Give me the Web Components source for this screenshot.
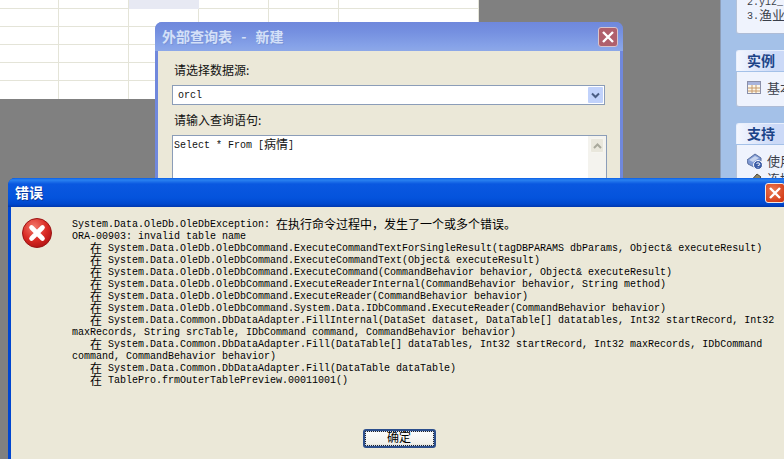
<!DOCTYPE html>
<html>
<head>
<meta charset="utf-8">
<style>
html, body { margin: 0; height: 100%; overflow: hidden; background: #808080; }
body { font: 12px "Liberation Mono", "Noto Sans CJK SC", monospace; }
.form { padding: 11px 0 0 14px; }
.mono { font: 10px/14px "Liberation Mono", monospace; letter-spacing: 0; }
</style>
</head>
<body>
<x-sheet></x-sheet>
<side-panel>
  <task-card clipped>
    <div class="mono" style="margin-top:-4px">2.yiz_</div>
    <div class="mono">3.<c-j style="font-size:13px">渔业</c-j></div>
  </task-card>
  <task-card title="实例" style="height:57px">
    <task-row icon="table">基本</task-row>
  </task-card>
  <task-card title="支持" style="height:200px">
    <task-row icon="help">使用</task-row>
    <task-row icon="pen">连接</task-row>
  </task-card>
</side-panel>

<xp-window id="query" title="外部查询表 - 新建" inactive>
  <div class="form">
    <form-label>请选择数据源:</form-label>
    <x-combo value="orcl"></x-combo>
    <form-label>请输入查询语句:</form-label>
    <x-memo>Select * From [<c-j>病情</c-j>]</x-memo>
  </div>
</xp-window>

<xp-window id="err" title="错误">
  <error-box>
    <err-line>System.Data.OleDb.OleDbException: <c-j>在执行命令过程中，发生了一个或多个错误。</c-j></err-line>
    <err-line>ORA-00903: invalid table name</err-line>
    <err-line>   <c-j>在</c-j> System.Data.OleDb.OleDbCommand.ExecuteCommandTextForSingleResult(tagDBPARAMS dbParams, Object&amp; executeResult)</err-line>
    <err-line>   <c-j>在</c-j> System.Data.OleDb.OleDbCommand.ExecuteCommandText(Object&amp; executeResult)</err-line>
    <err-line>   <c-j>在</c-j> System.Data.OleDb.OleDbCommand.ExecuteCommand(CommandBehavior behavior, Object&amp; executeResult)</err-line>
    <err-line>   <c-j>在</c-j> System.Data.OleDb.OleDbCommand.ExecuteReaderInternal(CommandBehavior behavior, String method)</err-line>
    <err-line>   <c-j>在</c-j> System.Data.OleDb.OleDbCommand.ExecuteReader(CommandBehavior behavior)</err-line>
    <err-line>   <c-j>在</c-j> System.Data.OleDb.OleDbCommand.System.Data.IDbCommand.ExecuteReader(CommandBehavior behavior)</err-line>
    <err-line>   <c-j>在</c-j> System.Data.Common.DbDataAdapter.FillInternal(DataSet dataset, DataTable[] datatables, Int32 startRecord, Int32</err-line>
    <err-line>maxRecords, String srcTable, IDbCommand command, CommandBehavior behavior)</err-line>
    <err-line>   <c-j>在</c-j> System.Data.Common.DbDataAdapter.Fill(DataTable[] dataTables, Int32 startRecord, Int32 maxRecords, IDbCommand</err-line>
    <err-line>command, CommandBehavior behavior)</err-line>
    <err-line>   <c-j>在</c-j> System.Data.Common.DbDataAdapter.Fill(DataTable dataTable)</err-line>
    <err-line>   <c-j>在</c-j> TablePro.frmOuterTablePreview.00011001()</err-line>
  </error-box>
</xp-window>

<script>
// small helper, every element is just a shadow root with its own style + markup
function shadow(el, html) {
    el.attachShadow({ mode: 'open' });
    const t = document.createElement('template');
    t.innerHTML = html;
    el.shadowRoot.appendChild(t.content.cloneNode(true));
}

class XSheet extends HTMLElement {
    constructor() {
        super();
        let cells = '';
        for (let r = 0; r < 6; r++) {
            for (let c = 0; c < 7; c++) {
                cells += `<div class="${r == 0 && c == 2 ? 'sel' : ''}"></div>`;
            }
        }
        shadow(this, `<style>
            :host { position: absolute; left: 0; top: 0; width: 479px; height: 99px; display: grid; background: #fff;
                grid-template-columns: 59px repeat(5, 70px) 70px; grid-template-rows: 9px repeat(5, 18px); }
            div { border-right: 1px solid #e4e4d8; border-bottom: 1px solid #e4e4d8; box-sizing: border-box; }
            div:nth-child(7n) { border-right: 0; }
            div:nth-child(n+36) { border-bottom: 0; }
            .sel { background: #e7e9f3; border-color: #e7e9f3; }
        </style>${cells}`);
    }
}
customElements.define('x-sheet', XSheet);

class SidePanel extends HTMLElement {
    constructor() {
        super();
        shadow(this, `<style>
            :host { position: absolute; left: 720px; top: 0; width: 64px; height: 459px; overflow: hidden; display: flex; flex-direction: column;
                gap: 16px; padding-left: 15px; box-sizing: border-box; background: #a4c1e8; border-left: 1px solid #8e9eb8;
                font: 13px "Noto Sans CJK SC", sans-serif; color: #3a3f4a; }
        </style><slot></slot>`);
    }
}
customElements.define('side-panel', SidePanel);

class TaskCard extends HTMLElement {
    constructor() {
        super();
        const t = this.getAttribute('title');
        this.removeAttribute('title');
        shadow(this, `<style>
            :host { display: flex; flex-direction: column; width: 64px; flex: none; }
            :host([clipped]) { height: 34px; }
            .head { height: 21px; padding: 0 0 2px 10px; display: flex; align-items: center; box-sizing: border-box; border-radius: 3px 0 0 0;
                background: linear-gradient(90deg, #f4f7ff, #cbd9f7 60%); border: 1px solid #e8effc; border-width: 1px 0 0 1px;
                font: bold 14px "Noto Sans CJK SC", sans-serif; color: #1c4488; margin-bottom: 1px; }
            .body { flex: 1; min-height: 0; overflow: hidden; background: #eff3fd; border-left: 1px solid #b4c2d8; border-bottom: 1px solid #aebcd6;
                border-radius: 0 0 0 3px; padding: 7px 0 0 10px; }
            :host([clipped]) .body { padding-top: 0; }
        </style>${t ? `<div class="head">${t}</div>` : ''}<div class="body"><slot></slot></div>`);
    }
}
customElements.define('task-card', TaskCard);

const ROW_ICONS = {
    table: `<rect x=".5" y="1.5" width="13" height="12" fill="#fbf7ea" stroke="#8a8fa8"/><rect x="1" y="2" width="12" height="3" fill="#a8b4dc"/><path d="M1 8h12M1 11h12M5 5v8M9 5v8" stroke="#c89a6a"/>`,
    help: `<path d="M0 7 8 1l6 4v3l-7 6-6-3z" fill="#7f9ad4" stroke="#5a6f9e"/><path d="M2 7l6-4 4 2-6 4z" fill="#c7d4ee"/><circle cx="11" cy="12" r="4.5" fill="#3d5ea8" stroke="#fff"/><path d="M9.5 10.5q1.5-1.5 3 0t-1.5 2v.5M11 14.5v.5" stroke="#fff" fill="none"/>`,
    pen: `<path d="M1 13 10 3l4 3-8 9H1z" fill="#8a8468" stroke="#50493a"/>`
};
class TaskRow extends HTMLElement {
    constructor() {
        super();
        shadow(this, `<style>
            :host { display: flex; align-items: center; gap: 4px; height: 17px; margin-bottom: 1px; white-space: nowrap; }
            svg { flex: none; width: 16px; height: 16px; }
        </style><svg viewBox="0 0 16 16">${ROW_ICONS[this.getAttribute('icon')]}</svg><span><slot></slot></span>`);
    }
}
customElements.define('task-row', TaskRow);

class XpWindow extends HTMLElement {
    constructor() {
        super();
        const title = this.getAttribute('title');
        this.removeAttribute('title');
        shadow(this, `<style>
            :host { position: absolute; box-sizing: border-box; display: flex; flex-direction: column; border-radius: 7px 7px 0 0; overflow: hidden;
                background: #0046d0; }
            :host(#query) { left: 155px; top: 22px; width: 468px; height: 170px; background: #7088dc; }
            :host(#err) { left: 8px; top: 178px; width: 782px; height: 300px; }
            .bar { height: 29px; flex: none; display: flex; align-items: center; justify-content: space-between; padding: 0 5px 0 7px;
                background: linear-gradient(#0a5ee6 0, #2a82f0 2px, #0a58e0 6px, #0453dc 20px, #0048ce 26px, #0037ae 29px);
                font: bold 14px "Noto Sans CJK SC", sans-serif; color: #fff; text-shadow: 1px 1px 0 #0a3aa0; word-spacing: 6px; }
            .bar span { padding-bottom: 1px; }
            :host([inactive]) .bar { background: linear-gradient(#6f88dc 0, #7590e0 10px, #86a2e8 24px, #8da8e8 29px);
                color: #d4e0f8; text-shadow: 1px 1px 0 #7a94d8; font-weight: bold; }
            .close { flex: none; width: 20px; height: 20px; box-sizing: border-box; border: 1px solid #f0e8e4; border-radius: 3px;
                background: radial-gradient(circle at 40% 35%, #ea7a52, #d43c18 80%); display: flex; align-items: center; justify-content: center; }
            :host([inactive]) .close { background: #b0606c; border-color: #d8c4cc; }
            .close svg { width: 12px; height: 12px; }
            .client { flex: 1; background: #ebe8d8; margin: 0 3px; }
        </style>
        <div class="bar"><span>${title}</span>
        <div class="close"><svg viewBox="0 0 12 12"><path d="M1 1l10 10M11 1 1 11" stroke="#fff" stroke-width="2.4"/></svg></div></div>
        <div class="client"><slot></slot></div>`);
    }
}
customElements.define('xp-window', XpWindow);

class FormLabel extends HTMLElement {
    constructor() {
        super();
        shadow(this, `<style>
            :host { display: block; height: 16px; padding-left: 2px; font: 12px/16px "Noto Sans CJK SC", sans-serif; color: #111; }
        </style><slot></slot>`);
    }
}
customElements.define('form-label', FormLabel);

class XCombo extends HTMLElement {
    constructor() {
        super();
        shadow(this, `<style>
            :host { display: flex; align-items: center; justify-content: space-between; box-sizing: border-box; width: 433px; height: 20px; background: #fff;
                border: 1px solid #8b9db8; padding: 0 1px 0 3px; font: 10px "Liberation Mono", monospace; color: #111; margin: 7px 0 7px; }
            span { padding: 1px 0 0 2px; }
            .btn { width: 15px; height: 16px; background: #c1d2fb; border-radius: 1px; display: flex; align-items: center; justify-content: center; }
            svg { width: 9px; height: 7px; }
        </style><span>${this.getAttribute('value')}</span>
        <div class="btn"><svg viewBox="0 0 9 7"><path d="M1 1.5 4.5 5 8 1.5" fill="none" stroke="#4a5d84" stroke-width="2"/></svg></div>`);
    }
}
customElements.define('x-combo', XCombo);

class XMemo extends HTMLElement {
    constructor() {
        super();
        shadow(this, `<style>
            :host { display: flex; box-sizing: border-box; width: 435px; height: 80px; background: #fff; border: 1px solid #8b9db8;
                font: 10px/14px "Liberation Mono", monospace; color: #111; margin-top: 7px; }
            .txt { flex: 1; padding: 3px 1px; white-space: pre; }
            .bar { width: 18px; background: #f4f3ee; padding: 2px; box-sizing: border-box; }
            .up { width: 14px; height: 15px; background: #e9e7dc; border: 1px solid #f6f5f0; box-sizing: border-box; border-radius: 2px;
                display: flex; align-items: center; justify-content: center; }
            svg { width: 9px; height: 6px; }
        </style><div class="txt"><slot></slot></div>
        <div class="bar"><div class="up"><svg viewBox="0 0 9 6"><path d="M1 5 4.5 1.5 8 5" fill="none" stroke="#a9a99c" stroke-width="2"/></svg></div></div>`);
    }
}
customElements.define('x-memo', XMemo);

class ErrLine extends HTMLElement {
    constructor() {
        super();
        shadow(this, `<style>
            :host { display: block; height: 12px; line-height: 12px; white-space: pre; }
        </style><slot></slot>`);
    }
}
customElements.define('err-line', ErrLine);

// cjk text inside the 10px mono lines, must not push the line box
class CJ extends HTMLElement {
    constructor() {
        super();
        shadow(this, `<style>
            :host { display: inline-block; height: 12px; margin-top: -1px; vertical-align: top; font: 12px/12px "Noto Sans CJK SC", sans-serif; }
        </style><slot></slot>`);
    }
}
customElements.define('c-j', CJ);

class ErrorBox extends HTMLElement {
    constructor() {
        super();
        shadow(this, `<style>
            :host { display: flex; flex-direction: column; align-items: center; font: 10px/12px "Liberation Mono", monospace; color: #000; padding-top: 11px; }
            .top { align-self: stretch; display: flex; gap: 20px; padding-left: 11px; }
            .lines { padding-top: 1px; }
            svg { flex: none; width: 30px; height: 30px; }
            button { margin-top: 42px; width: 73px; height: 19px; padding: 0 0 3px; line-height: 12px; background: linear-gradient(#fefefe, #f0f0ea 85%, #dcd8cc);
                border: 2px solid #2c4f8c; border-radius: 3px; outline: 1px dotted #222; outline-offset: -3px;
                box-shadow: inset 0 0 0 1px #c8d8f4; font-family: "Noto Sans CJK SC", sans-serif; font-size: 12px; color: #000; }
        </style>
        <div class="top">
          <svg viewBox="0 0 30 30">
            <defs><radialGradient id="rd" cx=".4" cy=".3" r=".8"><stop offset="0" stop-color="#f27a6c"/><stop offset=".55" stop-color="#da2a24"/><stop offset="1" stop-color="#a80e10"/></radialGradient></defs>
            <circle cx="15" cy="15" r="14.5" fill="url(#rd)" stroke="#9a1616"/>
            <path d="M9.5 9.5l11 11M20.5 9.5l-11 11" stroke="#fff" stroke-width="4.6" stroke-linecap="round"/>
          </svg>
          <div class="lines"><slot></slot></div>
        </div>
        <button>确定</button>`);
    }
}
customElements.define('error-box', ErrorBox);
</script>
</body>
</html>
